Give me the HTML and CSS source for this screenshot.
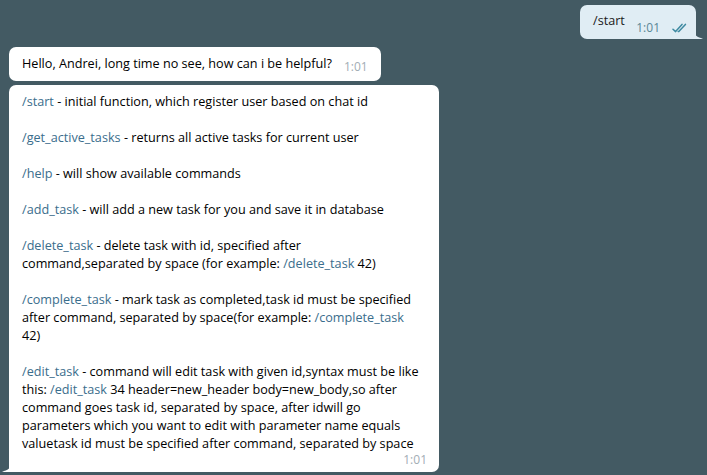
FILE: index.html
```html
<!DOCTYPE html>
<html>
<head>
<meta charset="utf-8">
<link rel="stylesheet" href="styles.css">
</head>
<body>
<div class="chat">
  <div class="row out">
    <div class="bubble bubble-out">
      <span class="text">/start</span>
      <span class="meta">1:01
        <svg class="checks" width="17" height="10" viewBox="0 0 17 10"><path d="M1 6.2 L3.6 8.6 L10 1.4 M6.2 8.6 L6.8 8.6 L13.4 1.4" fill="none" stroke="#3e8aa1" stroke-width="1.5" stroke-linecap="round" stroke-linejoin="round"/></svg>
      </span>
      <svg class="tail tail-out" width="10" height="12" viewBox="0 0 10 12"><path d="M0 0 C0 6 3 10 8 11 L10 12 L0 12 Z" fill="#e0edf4"/></svg>
    </div>
  </div>
  <div class="row in">
    <div class="bubble bubble-in short">
      <span class="text">Hello, Andrei, long time no see, how can i be helpful?</span>
      <span class="meta-in">1:01</span>
    </div>
  </div>
  <div class="row in">
    <div class="bubble bubble-in long">
      <p class="para"><a class="cmd">/start</a> - initial function, which register user based on chat id</p>
      <p class="para"><a class="cmd">/get_active_tasks</a> - returns all active tasks for current user</p>
      <p class="para"><a class="cmd">/help</a> - will show available commands</p>
      <p class="para"><a class="cmd">/add_task</a> - will add a new task for you and save it in database</p>
      <p class="para"><a class="cmd">/delete_task</a> - delete task with id, specified after command,separated by space (for example: <a class="cmd">/delete_task</a> 42)</p>
      <p class="para"><a class="cmd">/complete_task</a> - mark task as completed,task id must be specified after command, separated by space(for example: <a class="cmd">/complete_task</a> 42)</p>
      <p class="para last"><a class="cmd">/edit_task</a> - command will edit task with given id,syntax must be like this: <a class="cmd">/edit_task</a> 34 header=new_header body=new_body,so after command goes task id, separated by space, after idwill go parameters which you want to edit with parameter name equals valuetask id must be specified after command, separated by space</p>
      <div class="meta-row"><span class="meta-in">1:01</span></div>
      <svg class="tail tail-in" width="10" height="12" viewBox="0 0 10 12"><path d="M10 0 C10 6 7 10 2 11 L0 12 L10 12 Z" fill="#ffffff"/></svg>
    </div>
  </div>
</div>
</body>
</html>
```
FILE: styles.css
```css
html, body {
  margin: 0;
  padding: 0;
}
body {
  background: #435a63;
  font-family: "Open Sans", "Noto Sans", sans-serif;
  font-size: 12.65px;
  line-height: 18px;
  color: #000;
  width: 707px;
  height: 475px;
  overflow: hidden;
}
.chat {
  display: flex;
  flex-direction: column;
  padding: 5px 11px 0 9px;
  gap: 4px;
}
.row {
  display: flex;
}
.row.out {
  justify-content: flex-end;
  margin-bottom: 4px;
}
.bubble {
  position: relative;
  border-radius: 7px;
}
.bubble-out {
  background: #e0edf4;
  color: #1b1b1b;
  display: flex;
  align-items: flex-start;
  padding: 6px 7px 4px 13px;
  border-bottom-right-radius: 0;
  width: 96px;
}
.meta {
  display: flex;
  align-items: center;
  margin-left: auto;
  margin-top: 10px;
  font-size: 12px;
  line-height: 14px;
  color: #5a8796;
}
.checks {
  margin-left: 12px;
}
.bubble-in {
  background: #ffffff;
}
.short {
  display: flex;
  align-items: flex-start;
  padding: 7px 13px 7px 13px;
}
.short .meta-in {
  margin-left: 12px;
  margin-top: 6px;
  line-height: 14px;
}
.meta-in {
  font-size: 12px;
  color: #a2adb5;
}
.long {
  width: 398px;
  padding: 7px 19px 4px 13px;
  border-bottom-left-radius: 0;
}
.para {
  margin: 0 0 18px 0;
}
.para.last {
  margin-bottom: 0;
}
.cmd {
  color: #3a6d8c;
  text-decoration: none;
}
.meta-row {
  display: flex;
  justify-content: flex-end;
  line-height: 16px;
  margin-right: -7px;
}
.tail {
  position: absolute;
  bottom: 0;
}
.tail-out {
  right: -7px;
}
.tail-in {
  left: -7px;
}
```
